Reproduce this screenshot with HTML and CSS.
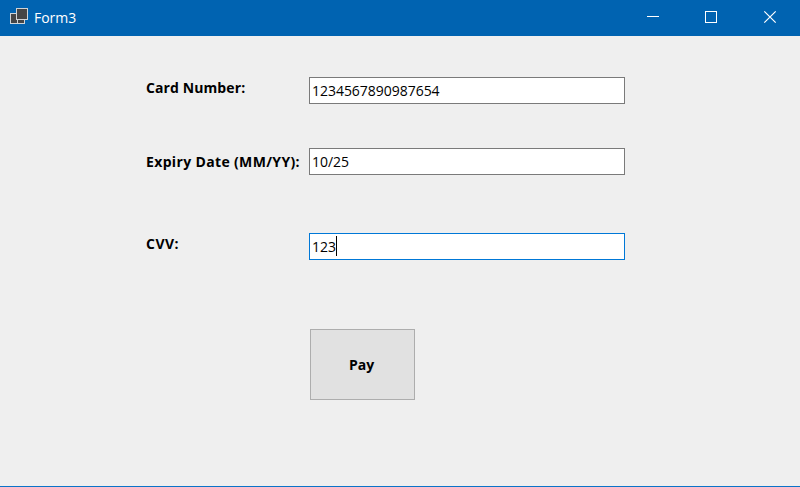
FILE: index.html
```html
<!DOCTYPE html>
<html lang="en">
<head>
<meta charset="utf-8">
<title>Form3</title>
<link rel="stylesheet" href="styles.css">
</head>
<body>
<div class="window">
  <header class="titlebar">
    <svg class="app-icon" width="18" height="17" viewBox="0 0 18 17" shape-rendering="crispEdges">
      <g fill="#454545" stroke="#cfd3d6">
        <rect x="0.5" y="5.5" width="7" height="10"/>
        <rect x="7.5" y="10.5" width="7" height="5"/>
        <rect x="6.5" y="0.5" width="11" height="11"/>
      </g>
    </svg>
    <span class="title">Form3</span>
    <div class="controls">
      <svg width="58" height="36" viewBox="0 0 58 36"><path d="M18 16.5h12" stroke="#fff"/></svg>
      <svg width="58" height="36" viewBox="0 0 58 36"><rect x="18.5" y="11.5" width="11" height="11" fill="none" stroke="#fff"/></svg>
      <svg width="58" height="36" viewBox="0 0 58 36"><path d="M19.3 11.3l11.4 11.4M30.7 11.3l-11.4 11.4" stroke="#fff" stroke-width="1.2"/></svg>
    </div>
  </header>
  <main class="form">
    <div class="row row-card"><label class="label card">Card Number:</label><div class="field">1234567890987654</div></div>
    <div class="row row-expiry"><label class="label expiry">Expiry Date (MM/YY):</label><div class="field">10/25</div></div>
    <div class="row row-cvv"><label class="label cvv">CVV:</label><div class="field focused">123<span class="caret"></span></div></div>
    <button class="pay">Pay</button>
  </main>
</div>
</body>
</html>
```
FILE: styles.css
```css
* { box-sizing: border-box; }
body { margin: 0; font-family: "Open Sans", "Noto Sans", sans-serif; font-size: 14px; color: #000; }
.window { width: 800px; height: 487px; display: flex; flex-direction: column; background: #efefef; border-bottom: 1px solid #0b73c8; }
.titlebar { height: 36px; flex: none; display: flex; background: #0063b1; color: #fff; }
.app-icon { margin: 8px 0 0 10px; }
.title { margin-left: 6px; line-height: 35px; letter-spacing: -0.05px; }
.controls { display: flex; margin-left: auto; margin-right: -3px; }
.controls svg { display: block; }
.form { padding: 41px 0 0 146px; }
.row { display: flex; height: 27px; }
.row-expiry { margin-top: 44px; }
.row-cvv { margin-top: 58px; }
.label { width: 163px; font-weight: 700; line-height: 22px; white-space: nowrap; }
.label.card { letter-spacing: 0.1px; }
.label.expiry { line-height: 27px; letter-spacing: 0.35px; }
.label.cvv { letter-spacing: 0.5px; }
.field { width: 316px; height: 27px; display: flex; padding-left: 2px; line-height: 25px; letter-spacing: -0.03px; background: #fff; border: 1px solid #7a7a7a; }
.field.focused { border-color: #0078d7; }
.caret { width: 1px; height: 20px; margin-top: 2px; background: #000; }
.pay { display: block; width: 105px; height: 71px; margin: 69px 0 0 164px; padding: 0 2px 0 0; font: inherit; font-weight: 700; color: #000; background: #e1e1e1; border: 1px solid #adadad; }
```
